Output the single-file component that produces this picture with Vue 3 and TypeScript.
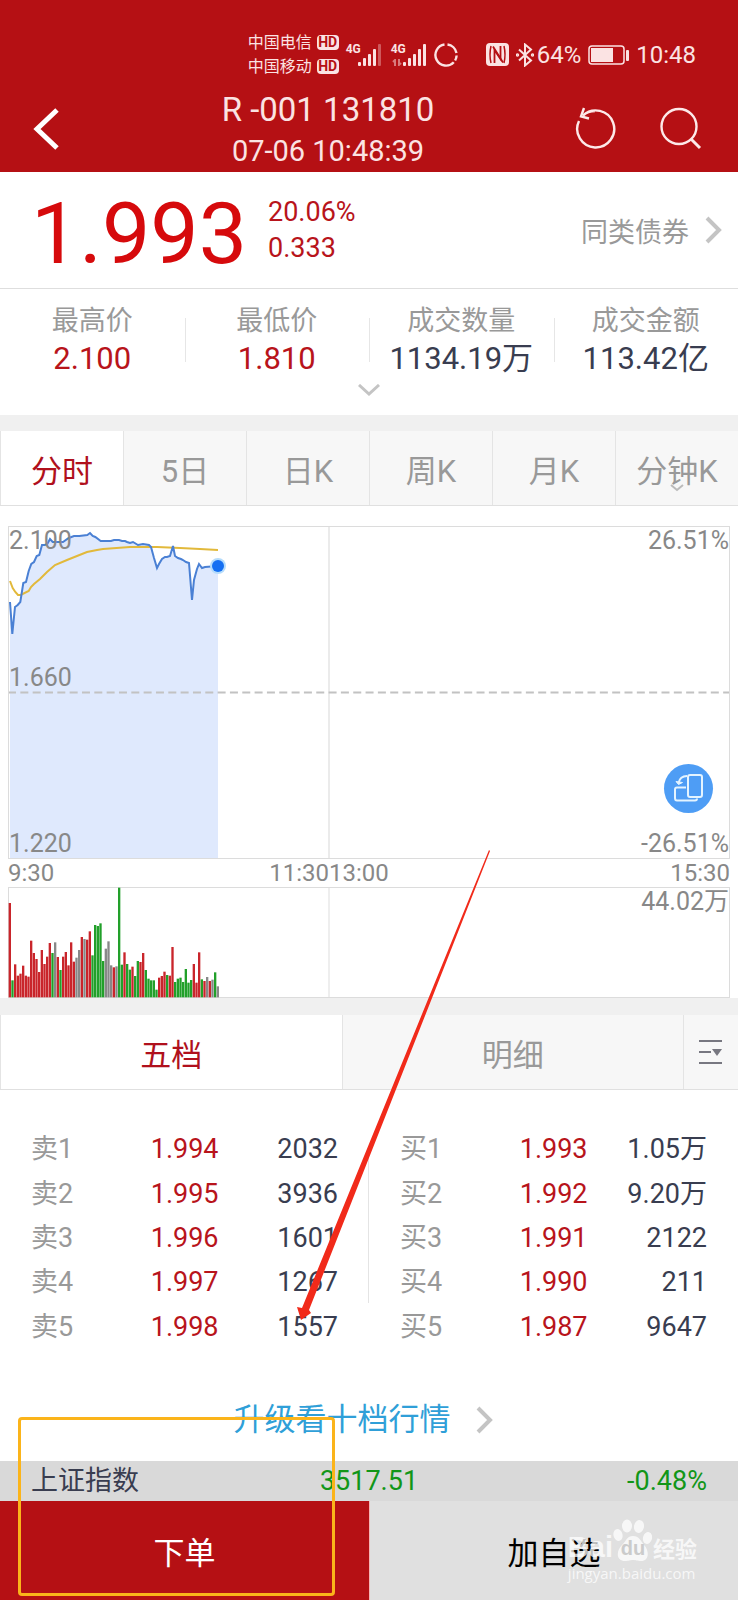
<script setup lang="ts">
import { ref } from 'vue'

type Tone = 'up' | 'down' | 'flat' | 'plain'

interface Stat {
  label: string
  value: string
  tone: Tone
}

interface Quote {
  label: string
  price: string
  amount: string
}

const stats: Stat[] = [
  { label: '最高价', value: '2.100', tone: 'up' },
  { label: '最低价', value: '1.810', tone: 'up' },
  { label: '成交数量', value: '1134.19万', tone: 'plain' },
  { label: '成交金额', value: '113.42亿', tone: 'plain' },
]

const periods: string[] = ['分时', '5日', '日K', '周K', '月K', '分钟K']
const period = ref('分时')
const depthTabs: string[] = ['五档', '明细']
const depthTab = ref('五档')

const sells: Quote[] = [
  { label: '卖1', price: '1.994', amount: '2032' },
  { label: '卖2', price: '1.995', amount: '3936' },
  { label: '卖3', price: '1.996', amount: '1601' },
  { label: '卖4', price: '1.997', amount: '1267' },
  { label: '卖5', price: '1.998', amount: '1557' },
]
const buys: Quote[] = [
  { label: '买1', price: '1.993', amount: '1.05万' },
  { label: '买2', price: '1.992', amount: '9.20万' },
  { label: '买3', price: '1.991', amount: '2122' },
  { label: '买4', price: '1.990', amount: '211' },
  { label: '买5', price: '1.987', amount: '9647' },
]
const books = [
  { name: '卖盘', rows: sells },
  { name: '买盘', rows: buys },
]

const priceLine =
  '2,76 4.3,108 7,81 9.7,79 12.3,76 15.3,57 18,56 20.7,45 23.3,38 26,36 28.7,30 31.3,29 34,19 36.7,19 39.3,18 42,13 44.7,16 55,16 60.7,12 66,10 71.3,10 79.3,9 82,7 84.7,10 87.3,11 92.7,15 103,15 106,14 111,14 114,15 117,15 119,16 122,17 125,16 130,19 135,18 141,19 143,21 146,32 149,42 151,38 154,33 157,31 159,31 162,30 165,20 167,30 170,32 173,33 175,34 178,36 181,37 184,74 186,54 189,43 191,38 194,42 197,41 210,40'
const averageLine =
  '2,55 4.7,62 7.3,66 10,69 12.7,69 20.7,65 23,61 26,58 32,53 39,46 47,39 59,34 69,30 79,26 89,24 95,23 122,21 135,21 149,21 172,22 192,23 210,24'
const priceArea = `2,332 ${priceLine} 210,332`

// One entry per minute: r = rise, g = fall, n = unchanged, then the bar height.
const volumes =
  'r283 g51 r99 r65 r71 r95 r65 r62 r170 r133 r115 r76 r142 r100 r122 r163 g133 n165 r121 g82 r122 r136 r96 r165 r107 n119 n142 r181 n175 r173 r198 g126 g217 g214 g222 g109 n146 n168 n96 r90 n93 g329 g98 r135 g100 g83 r92 g64 g109 r106 r133 g82 g56 g51 g51 g23 r59 r64 r77 g67 r65 r151 g46 g56 g59 g46 g85 g44 g52 r100 r44 r135 g54 r49 n61 r49 n53 g75 n33'
const fills: Record<string, string> = { r: '#c9252b', g: '#22a02a', n: '#888888' }
const bars = volumes.split(' ').map((item, i) => ({
  x: 2 + i * 8,
  height: Number(item.slice(1)),
  fill: fills[item[0]],
}))
</script>

<template>
  <div class="page">
    <header class="top">
      <div class="status">
        <div class="carriers">
          <div class="carrier">中国电信<span class="hd">HD</span></div>
          <div class="carrier">中国移动<span class="hd">HD</span></div>
        </div>
        <div class="signal">
          <span class="net">4G</span>
          <svg width="26" height="24" viewBox="0 0 26 24" fill="#fbe3e3">
            <rect x="0" y="19" width="3" height="4" rx="1" />
            <rect x="5" y="15" width="3" height="8" rx="1" />
            <rect x="10" y="11" width="3" height="12" rx="1" />
            <rect x="15" y="6" width="3" height="17" rx="1" />
            <rect x="20" y="1" width="3" height="22" rx="1" opacity=".35" />
          </svg>
        </div>
        <div class="signal">
          <span class="net">4G</span>
          <svg width="26" height="24" viewBox="0 0 26 24" fill="#fbe3e3">
            <rect x="0" y="19" width="3" height="4" rx="1" />
            <rect x="5" y="15" width="3" height="8" rx="1" />
            <rect x="10" y="11" width="3" height="12" rx="1" />
            <rect x="15" y="6" width="3" height="17" rx="1" />
            <rect x="20" y="1" width="3" height="22" rx="1" />
          </svg>
          <svg class="traffic" width="10" height="7" viewBox="0 0 10 7" fill="none" stroke="#fbe3e3" opacity=".5">
            <path d="M3 7V1L1 3M7 0v6l2-2" stroke-width="2" />
          </svg>
        </div>
        <svg class="ring" width="24" height="24" viewBox="0 0 24 24" fill="none" stroke="#fbe3e3" stroke-width="2.400">
          <path d="M13.500 1.500A10.600 10.600 0 0 1 22.500 10M22.600 12.500a10.600 10.600 0 0 1-1.500 5M19.800 19.200A10.600 10.600 0 1 1 10.500 1.500" />
        </svg>
        <svg class="nfc" width="24" height="24" viewBox="0 0 24 24">
          <rect width="23" height="23" rx="4" fill="#fbe3e3" />
          <g fill="none" stroke="#b51014">
            <path d="M5 3q-2 8.500 0 17" stroke-width="1.500" />
            <path d="M8.500 20V7l6 9V3" stroke-width="1.800" />
            <path d="M7 3.500L17 19.500" stroke-width="1.800" />
            <path d="M18 3q2 8.500 0 17" stroke-width="1.500" />
          </g>
        </svg>
        <svg class="bluetooth" width="18" height="24" viewBox="0 0 18 24" fill="none" stroke="#fbe3e3" stroke-width="2">
          <path d="M3 6.500l12 11-6 5V1.500l6 5-12 11" />
          <circle cx="1.500" cy="12" r=".7" />
          <circle cx="16.500" cy="12" r=".7" />
        </svg>
        <span class="percent">64%</span>
        <svg class="battery" width="42" height="22" viewBox="0 0 42 22">
          <rect x="1" y="2" width="35" height="18" rx="3" fill="none" stroke="#fbe3e3" stroke-width="1.500" />
          <rect x="3" y="4" width="22" height="14" fill="#fbe3e3" />
          <rect x="38" y="6" width="3" height="11" rx="1" fill="#fbe3e3" />
        </svg>
        <time class="clock">10:48</time>
      </div>
      <div class="nav">
        <button class="icon-button back" type="button" aria-label="返回">
          <svg width="28" height="44" viewBox="0 0 28 44" fill="none" stroke="#fff" stroke-width="5">
            <path d="M25 3L5 22l20 19" />
          </svg>
        </button>
        <div class="title">
          <h1>R -001 131810</h1>
          <p>07-06 10:48:39</p>
        </div>
        <div class="actions">
          <button class="icon-button" type="button" aria-label="刷新">
            <svg width="42" height="44" viewBox="0 0 42 44" fill="none" stroke="#fde9e9" stroke-width="2.400">
              <path d="M5 14A18.500 18.500 0 1 0 9 8.500Q14 4 21 4" />
              <path d="M10 1L7 9.500l8 2" />
            </svg>
          </button>
          <button class="icon-button" type="button" aria-label="搜索">
            <svg width="42" height="44" viewBox="0 0 42 44" fill="none" stroke="#fde9e9" stroke-width="2.400">
              <circle cx="19" cy="19.500" r="17.500" />
              <path d="M31 32l9 9" stroke-width="3" />
            </svg>
          </button>
        </div>
      </div>
    </header>

    <section class="summary">
      <strong class="last">1.993</strong>
      <div class="change">
        <span>20.06%</span>
        <span>0.333</span>
      </div>
      <a class="similar" href="#similar">
        同类债券
        <svg width="18" height="28" viewBox="0 0 18 28" fill="none" stroke="#c4c4c4" stroke-width="4">
          <path d="M3 2l12 12L3 26" />
        </svg>
      </a>
    </section>

    <section class="stats">
      <dl class="stat-grid">
        <div v-for="item in stats" :key="item.label" class="stat">
          <dt>{{ item.label }}</dt>
          <dd :class="item.tone">{{ item.value }}</dd>
        </div>
      </dl>
      <button class="icon-button expand" type="button" aria-label="展开">
        <svg width="22" height="12" viewBox="0 0 22 12" fill="none" stroke="#c4c4c4" stroke-width="3">
          <path d="M1 1l10 9 10-9" />
        </svg>
      </button>
    </section>

    <nav class="tabs periods">
      <button
        v-for="name in periods"
        :key="name"
        type="button"
        class="tab"
        :class="{ active: name === period }"
        @click="period = name"
      >
        {{ name }}
        <svg v-if="name === '分钟K'" class="more" width="14" height="8" viewBox="0 0 14 8" fill="none" stroke="#bbb" stroke-width="2">
          <path d="M1 1l6 5 6-5" />
        </svg>
      </button>
    </nav>

    <section class="charts">
      <div class="chart">
        <svg viewBox="0 0 722 333" aria-hidden="true">
          <polygon :points="priceArea" fill="#dfe9fd" />
          <path d="M321 0V333" stroke="#ebebeb" stroke-width="2" />
          <path d="M0 166.500H722" stroke="#c2c2c2" stroke-width="2" stroke-dasharray="8 4.330" />
          <rect x=".5" y=".5" width="721" height="332" fill="none" stroke="#dcdcdc" />
          <polyline :points="averageLine" fill="none" stroke="#e2b93b" stroke-width="2" />
          <polyline :points="priceLine" fill="none" stroke="#4a80d4" stroke-width="2" />
          <circle cx="210" cy="40" r="8" fill="#b5dcfb" />
          <circle cx="210" cy="40" r="6" fill="#146ff2" />
        </svg>
        <span class="mark high">2.100</span>
        <span class="mark middle">1.660</span>
        <span class="mark low">1.220</span>
        <span class="mark high right">26.51%</span>
        <span class="mark low right">-26.51%</span>
        <button class="icon-button rotate" type="button" aria-label="横屏">
          <svg width="49" height="49" viewBox="0 0 49 49" fill="none" stroke="#e4f4ff" stroke-width="2">
            <rect x="24" y="11" width="14" height="22" rx="2" />
            <path d="M22 23.500H13q-2 0-2 2V34q0 2.500 2 2.500h18q2 0 2-2" />
            <path d="M23 12q-7 0-8.500 7" />
            <path d="M12 17.500l2.500 3 4-2z" fill="#e4f4ff" stroke-width="1" />
          </svg>
        </button>
      </div>
      <div class="times">
        <span>9:30</span>
        <span class="end">11:30</span>
        <span>13:00</span>
        <span class="end">15:30</span>
      </div>
      <div class="chart">
        <svg viewBox="0 0 2166 333" aria-hidden="true">
          <path d="M963 0V333" stroke="#ebebeb" stroke-width="5" />
          <rect x="1.500" y="1.500" width="2163" height="330" fill="none" stroke="#dcdcdc" stroke-width="3" />
          <rect
            v-for="bar in bars"
            :key="bar.x"
            :x="bar.x"
            :y="331 - bar.height"
            width="7"
            :height="bar.height"
            :fill="bar.fill"
          />
        </svg>
        <span class="mark high right">44.02万</span>
      </div>
    </section>

    <nav class="tabs depth">
      <button
        v-for="name in depthTabs"
        :key="name"
        type="button"
        class="tab"
        :class="{ active: name === depthTab }"
        @click="depthTab = name"
      >
        {{ name }}
      </button>
      <button class="tab filter" type="button" aria-label="显示设置">
        <svg width="24" height="26" viewBox="0 0 24 26" fill="none" stroke="#777780" stroke-width="2">
          <path d="M0 2h23M0 13h12M0 24h23" />
          <path d="M13 10h10l-5 7z" fill="#777780" stroke="none" />
        </svg>
      </button>
    </nav>

    <section class="book">
      <table v-for="side in books" :key="side.name" :aria-label="side.name">
        <tbody>
          <tr v-for="row in side.rows" :key="row.label">
            <th scope="row">{{ row.label }}</th>
            <td class="up">{{ row.price }}</td>
            <td class="amount">{{ row.amount }}</td>
          </tr>
        </tbody>
      </table>
    </section>

    <a class="upgrade" href="#level2">
      升级看十档行情
      <svg width="18" height="28" viewBox="0 0 18 28" fill="none" stroke="#c4c4c4" stroke-width="4">
        <path d="M3 2l12 12L3 26" />
      </svg>
    </a>

    <div class="index">
      <span class="index-name">上证指数</span>
      <span class="index-value">3517.51</span>
      <span class="index-change">-0.48%</span>
    </div>

    <footer class="bottom">
      <button class="order" type="button">下单</button>
      <button class="watch" type="button">加自选</button>
      <div class="brand">
        <div class="brand-name">
          <span>Bai</span>
          <span class="paw">
            <svg width="40" height="42" viewBox="0 0 40 42" fill="#fff">
              <ellipse cx="5" cy="16" rx="4.500" ry="6" transform="rotate(-15 5 16)" />
              <ellipse cx="14" cy="7" rx="5" ry="6.500" />
              <ellipse cx="26" cy="7.500" rx="5" ry="6.500" transform="rotate(12 26 7.500)" />
              <ellipse cx="34.500" cy="19" rx="4.500" ry="6" transform="rotate(15 34.500 19)" />
              <path d="M20 17c6 0 8 5 11 9 5 5 6 16-3 16-4 0-5-1-8-1s-4 1-8 1c-9 0-9-10-3-16 4-4 5-9 11-9z" />
            </svg>
            <span class="du">du</span>
          </span>
          <span class="cn">经验</span>
        </div>
        <div class="brand-url">jingyan.baidu.com</div>
      </div>
    </footer>

    <svg class="arrow" width="194" height="472" viewBox="0 0 194 472" aria-hidden="true">
      <path d="M192 0L193 1 12 460l2 3L4 470 0 457l5 1z" fill="#f12a1a" />
    </svg>
    <div class="frame" aria-hidden="true"></div>
  </div>
</template>

<style>
body {
  margin: 0;
  background: #fff;
}
</style>

<style scoped>
.page {
  position: relative;
  font-family: Roboto, 'Noto Sans CJK SC', sans-serif;
  font-size: 27px;
  color: #393d50;
  background: #fff;
  overflow: hidden;
}

button {
  font: inherit;
  color: inherit;
  border: 0;
  padding: 0;
  background: none;
}

a {
  text-decoration: none;
}

.icon-button {
  display: flex;
  align-items: center;
  justify-content: center;
}

.up {
  color: #b8141b;
}

.plain {
  color: #393d50;
}

/* header */
.top {
  background: #b51014;
  color: #fbe3e3;
}

.status {
  display: flex;
  align-items: center;
  justify-content: flex-end;
  height: 61px;
  padding: 24px 42px 0 0;
  font-size: 24px;
}

.carrier {
  display: flex;
  align-items: center;
  gap: 5px;
  font-size: 16px;
  line-height: 24px;
}

.hd {
  width: 22px;
  border-radius: 4px;
  background: #fbe3e3;
  color: #b51014;
  font-size: 14px;
  font-weight: 700;
  line-height: 15px;
  text-align: center;
}

.signal {
  position: relative;
  display: flex;
  align-items: flex-start;
  margin-left: 7px;
}

.net {
  width: 12px;
  font-size: 12px;
  font-weight: 700;
  line-height: 12px;
  white-space: nowrap;
}

.signal svg {
  display: block;
}

.signal .traffic {
  position: absolute;
  left: 1px;
  bottom: 1px;
}

.ring {
  margin-left: 5px;
}

.nfc {
  margin-left: 28px;
}

.bluetooth {
  margin-left: 6px;
}

.percent {
  margin-left: 3px;
}

.battery {
  margin: 0 6px 0 7px;
}

.nav {
  display: flex;
  height: 87px;
}

.back {
  width: 87px;
  padding-left: 5px;
}

.title {
  flex: 1;
  text-align: center;
}

.title h1 {
  margin: 4px 0 0;
  font-size: 33px;
  font-weight: 400;
  line-height: 42px;
}

.title p {
  margin: 0;
  font-size: 29px;
  line-height: 40px;
}

.actions {
  display: flex;
  align-items: center;
  justify-content: flex-end;
  gap: 44px;
  width: 133px;
  padding-right: 36px;
}

/* price summary */
.summary {
  display: flex;
  align-items: center;
  height: 116px;
  padding: 0 16px 0 31px;
  border-bottom: 1px solid #dedede;
}

.last {
  padding-top: 8px;
  font-size: 86px;
  font-weight: 400;
  line-height: 108px;
  color: #d60a0c;
}

.change {
  display: flex;
  flex-direction: column;
  margin-left: 21px;
  line-height: 36px;
  color: #b8141b;
}

.similar {
  display: flex;
  align-items: center;
  gap: 15px;
  margin-left: auto;
  color: #999;
}

/* statistics */
.stats {
  padding: 14px 0 19px;
  border-bottom: 16px solid #f0f0f0;
}

.stat-grid {
  display: grid;
  grid-template-columns: repeat(4, 1fr);
  margin: 0;
  text-align: center;
}

.stat {
  position: relative;
}

.stat + .stat::before {
  content: '';
  position: absolute;
  left: 0;
  top: 15px;
  height: 44px;
  border-left: 1px solid #e6e6e6;
}

.stat dt {
  line-height: 36px;
  color: #999;
}

.stat dd {
  margin: 0;
  font-size: 31px;
  line-height: 40px;
}

.expand {
  width: 100%;
  height: 17px;
  align-items: flex-end;
}

/* tab bars */
.tabs {
  display: flex;
  height: 74px;
  border-bottom: 1px solid #e0e0e0;
  background: #f7f7f7;
  font-size: 31px;
  color: #999;
}

.tab {
  position: relative;
  flex: 1;
  border-left: 1px solid #e4e4e4;
}

.tab.active {
  background: #fff;
  color: #b0101c;
}

.more {
  position: absolute;
  left: 0;
  right: 0;
  bottom: 13px;
  margin: 0 auto;
}

.tab.filter {
  flex: 0 0 55px;
}

.filter svg {
  display: block;
  margin: 0 auto;
}

/* charts */
.charts {
  padding: 20px 8px 0;
  border-bottom: 17px solid #f0f0f0;
  font-size: 24px;
  color: #888;
}

.chart {
  position: relative;
}

.chart > svg {
  display: block;
  width: 100%;
}

.mark {
  position: absolute;
  left: 1px;
  font-size: 25px;
  line-height: 28px;
}

.mark.right {
  left: auto;
  right: 1px;
}

.high {
  top: 1px;
}

.middle {
  bottom: 167px;
}

.low {
  bottom: 1px;
}

.rotate {
  position: absolute;
  right: 17px;
  bottom: 46px;
  border-radius: 50%;
  background: #4e9df5;
}

.times {
  display: grid;
  grid-template-columns: 161fr 160fr 200fr 201fr;
  line-height: 28px;
}

.end {
  text-align: right;
}

/* order book */
.book {
  position: relative;
  display: grid;
  grid-template-columns: 1fr 1fr;
  padding-top: 37px;
}

.book::after {
  content: '';
  position: absolute;
  left: calc(50% - 1px);
  top: 60px;
  bottom: 46px;
  border-left: 1px solid #e4e4e4;
}

.book table {
  height: 222px;
  margin: 0 31px;
  border-collapse: collapse;
}

.book th,
.book td {
  padding: 0;
  font-weight: 400;
  line-height: 36px;
  text-align: left;
}

.book th {
  width: 39%;
  color: #999;
}

.book .amount {
  text-align: right;
}

.upgrade {
  display: flex;
  align-items: center;
  justify-content: center;
  gap: 24px;
  margin: 49px 0 19px;
  padding-right: 12px;
  font-size: 31px;
  line-height: 44px;
  color: #2f9fd8;
}

/* bottom */
.index {
  display: grid;
  grid-template-columns: 1fr 1fr 1fr;
  padding: 0 31px;
  line-height: 40px;
  background: #d9d9d9;
  color: #129618;
}

.index-name {
  color: #393d50;
}

.index-value {
  text-align: center;
}

.index-change {
  text-align: right;
}

.bottom {
  position: relative;
  display: grid;
  grid-template-columns: 1fr 1fr;
  height: 99px;
  font-size: 31px;
}

.order {
  background: #b51014;
  color: #fff;
}

.watch {
  border-left: 1px solid #f5b5b5;
  background: #e0e0e0;
  color: #000;
}

.brand {
  position: absolute;
  right: 41px;
  top: 18px;
  color: #fff;
  opacity: 0.75;
  pointer-events: none;
}

.brand-name {
  display: flex;
  align-items: flex-end;
  font-family: 'Liberation Sans', sans-serif;
  font-size: 29px;
  font-weight: 700;
  line-height: 28px;
}

.paw {
  position: relative;
  height: 42px;
}

.paw svg {
  display: block;
}

.du {
  position: absolute;
  left: 0;
  right: 0;
  bottom: -1px;
  font-size: 20px;
  text-align: center;
  color: #c4c4c4;
}

.brand-name .cn {
  font-family: 'Noto Sans CJK SC', sans-serif;
  font-size: 22px;
}

.brand-url {
  font-family: 'Open Sans', sans-serif;
  font-size: 15px;
  line-height: 24px;
}

/* annotations */
.arrow {
  position: absolute;
  left: 297px;
  top: 850px;
}

.frame {
  position: absolute;
  left: 18px;
  bottom: 4px;
  width: 311px;
  height: 173px;
  border: 3px solid #fbb41a;
  border-radius: 4px;
}
</style>
